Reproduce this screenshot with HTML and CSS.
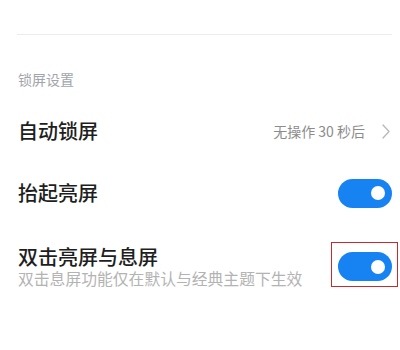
FILE: index.html
```html
<!DOCTYPE html>
<html lang="zh-CN">
<head>
<meta charset="utf-8">
<title>锁屏设置</title>
<link rel="stylesheet" href="styles.css">
</head>
<body>
<div class="page">
  <div class="divider"></div>
  <div class="section-label">锁屏设置</div>
  <div class="row">
    <div class="title">自动锁屏</div>
    <div class="value">
      <span class="value-text">无操作 30 秒后</span>
      <svg class="chevron" width="8" height="15" viewBox="0 0 8 15"><polyline points="1,1 7,7.5 1,14" fill="none" stroke="#b8b8b8" stroke-width="1.3" stroke-linecap="round" stroke-linejoin="round"/></svg>
    </div>
  </div>
  <div class="row">
    <div class="title">抬起亮屏</div>
    <div class="switch on"><span class="knob"></span></div>
  </div>
  <div class="row tall">
    <div class="text-block">
      <div class="title">双击亮屏与息屏</div>
      <div class="subtitle">双击息屏功能仅在默认与经典主题下生效</div>
    </div>
    <div class="switch on marked"><span class="knob"></span></div>
  </div>
</div>
</body>
</html>
```

FILE: styles.css
```css
* { box-sizing: border-box; }
html, body { margin: 0; padding: 0; background: #ffffff; }
body {
  font-family: "Noto Sans CJK SC", "Noto Sans", "Liberation Sans", sans-serif;
  width: 400px;
  height: 350px;
  overflow: hidden;
}
.page {
  padding: 0 8px 0 18px;
}
.divider {
  margin-top: 34px;
  margin-left: -1px;
  height: 1px;
  background: #ececec;
}
.section-label {
  margin: 34px 0 11px;
  font-size: 14px;
  line-height: 20px;
  color: #a2a5ab;
}
.row {
  height: 62px;
  display: flex;
  align-items: center;
  justify-content: space-between;
}
.row.tall {
  height: 85px;
}
.title {
  font-size: 20px;
  line-height: 24px;
  font-weight: 500;
  color: #1e1e1e;
}
.text-block {
  display: flex;
  flex-direction: column;
}
.subtitle {
  font-size: 15.8px;
  line-height: 20px;
  color: #b3b3b3;
}
.value {
  display: flex;
  align-items: center;
  gap: 17px;
  margin-right: 2px;
}
.value-text {
  font-size: 14px;
  line-height: 20px;
  color: #8c8c8c;
}
.chevron { display: block; }
.switch {
  position: relative;
  width: 54px;
  height: 29px;
  border-radius: 15px;
  background: #e0e0e0;
  display: flex;
  align-items: center;
  justify-content: flex-end;
  padding-right: 7px;
  flex-shrink: 0;
}
.switch.on { background: #1782f2; }
.knob {
  width: 14px;
  height: 14px;
  border-radius: 50%;
  background: #ffffff;
}
.switch.marked::after {
  content: "";
  position: absolute;
  left: -7px;
  right: -6px;
  top: -10px;
  bottom: -6px;
  border: 1px solid #c62a2f;
}
```
